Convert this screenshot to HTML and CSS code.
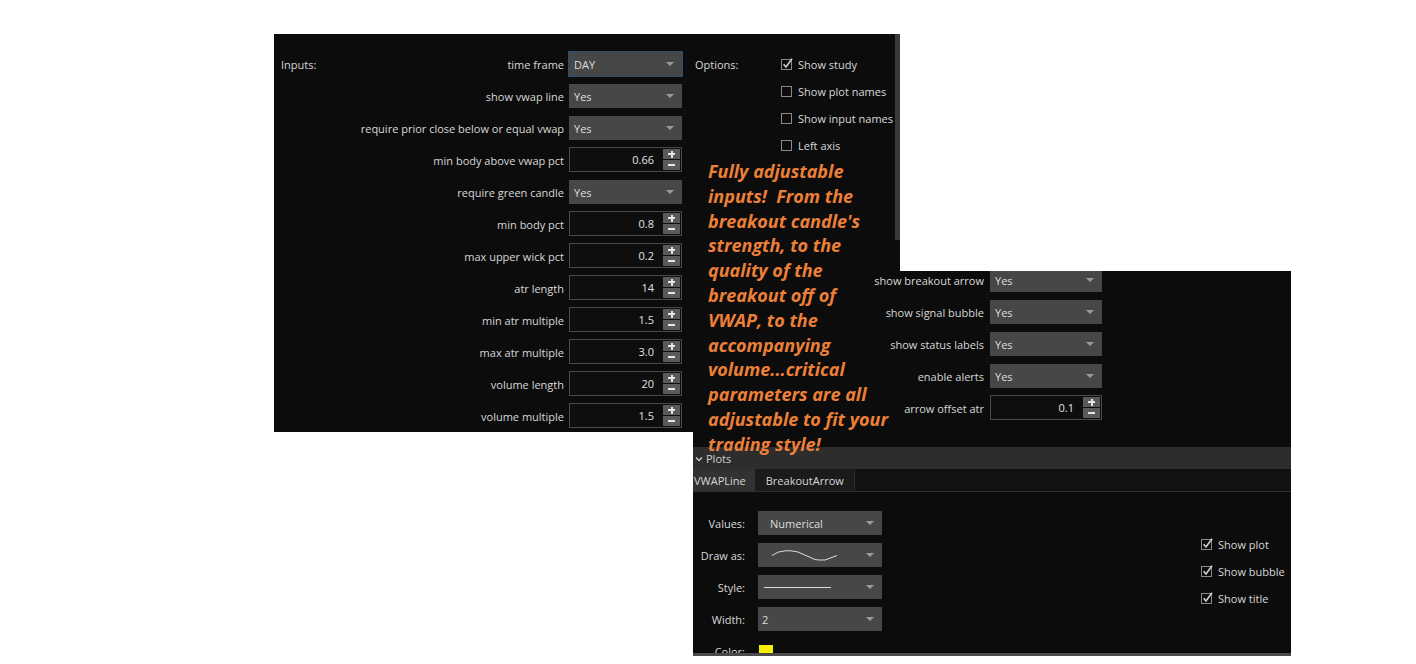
FILE: index.html
```html
<!DOCTYPE html>
<html>
<head>
<meta charset="utf-8">
<link rel="stylesheet" href="styles.css">
</head>
<body>
<div class="canvas">

  <div class="win win1">
    <div class="inputs">
      <div class="sec-title">Inputs:</div>

      <div class="lbl">time frame</div>
      <div class="dd focus"><span>DAY</span><i class="caret"></i></div>

      <div class="lbl">show vwap line</div>
      <div class="dd"><span>Yes</span><i class="caret"></i></div>

      <div class="lbl">require prior close below or equal vwap</div>
      <div class="dd"><span>Yes</span><i class="caret"></i></div>

      <div class="lbl">min body above vwap pct</div>
      <div class="spin"><span class="val">0.66</span><div class="btns"><b class="plus"></b><b class="minus"></b></div></div>

      <div class="lbl">require green candle</div>
      <div class="dd"><span>Yes</span><i class="caret"></i></div>

      <div class="lbl">min body pct</div>
      <div class="spin"><span class="val">0.8</span><div class="btns"><b class="plus"></b><b class="minus"></b></div></div>

      <div class="lbl">max upper wick pct</div>
      <div class="spin"><span class="val">0.2</span><div class="btns"><b class="plus"></b><b class="minus"></b></div></div>

      <div class="lbl">atr length</div>
      <div class="spin"><span class="val">14</span><div class="btns"><b class="plus"></b><b class="minus"></b></div></div>

      <div class="lbl">min atr multiple</div>
      <div class="spin"><span class="val">1.5</span><div class="btns"><b class="plus"></b><b class="minus"></b></div></div>

      <div class="lbl">max atr multiple</div>
      <div class="spin"><span class="val">3.0</span><div class="btns"><b class="plus"></b><b class="minus"></b></div></div>

      <div class="lbl">volume length</div>
      <div class="spin"><span class="val">20</span><div class="btns"><b class="plus"></b><b class="minus"></b></div></div>

      <div class="lbl">volume multiple</div>
      <div class="spin"><span class="val">1.5</span><div class="btns"><b class="plus"></b><b class="minus"></b></div></div>
    </div>

    <div class="options">
      <div class="opt-title">Options:</div>
      <div class="checks">
        <div class="chk"><span class="box on"><svg viewBox="0 0 12 12" width="12" height="12"><rect x="0.5" y="1.5" width="10" height="10" fill="none" stroke="#8a8a8a"/><path d="M2.6 6.2 L5 9 L11 0.8" fill="none" stroke="#d0d0d0" stroke-width="1.6"/></svg></span>Show study</div>
        <div class="chk"><span class="box"><svg viewBox="0 0 12 12" width="12" height="12"><rect x="0.5" y="1.5" width="10" height="10" fill="none" stroke="#8a8a8a"/></svg></span>Show plot names</div>
        <div class="chk"><span class="box"><svg viewBox="0 0 12 12" width="12" height="12"><rect x="0.5" y="1.5" width="10" height="10" fill="none" stroke="#8a8a8a"/></svg></span>Show input names</div>
        <div class="chk"><span class="box"><svg viewBox="0 0 12 12" width="12" height="12"><rect x="0.5" y="1.5" width="10" height="10" fill="none" stroke="#8a8a8a"/></svg></span>Left axis</div>
      </div>
    </div>

    <div class="scroll"></div>
  </div>

  <div class="win win2">
    <div class="rows2">
      <div class="lbl">show breakout arrow</div>
      <div class="dd"><span>Yes</span><i class="caret"></i></div>

      <div class="lbl">show signal bubble</div>
      <div class="dd"><span>Yes</span><i class="caret"></i></div>

      <div class="lbl">show status labels</div>
      <div class="dd"><span>Yes</span><i class="caret"></i></div>

      <div class="lbl">enable alerts</div>
      <div class="dd"><span>Yes</span><i class="caret"></i></div>

      <div class="lbl">arrow offset atr</div>
      <div class="spin"><span class="val">0.1</span><div class="btns"><b class="plus"></b><b class="minus"></b></div></div>
    </div>

    <div class="plots-head"><svg class="chev" viewBox="0 0 8 6" width="8" height="6"><path d="M1 1.5 L4 4.5 L7 1.5" fill="none" stroke="#cfcfcf" stroke-width="1.3"/></svg>Plots</div>
    <div class="tabs">
      <div class="tab active">VWAPLine</div>
      <div class="tab">BreakoutArrow</div>
    </div>

    <div class="plot-body">
      <div class="plot-grid">
        <div class="plbl">Values:</div>
        <div class="dd wide"><span class="num">Numerical</span><i class="caret"></i></div>

        <div class="plbl">Draw as:</div>
        <div class="dd wide"><svg class="wave" viewBox="0 0 90 24" width="90" height="24"><path d="M14 12.5 Q20 8 28 7.7 Q34 7.5 40 9 L57 16.5 Q60 17.2 64 17 L67 17 L79 12.5" fill="none" stroke="#dcdcdc" stroke-width="1"/></svg><i class="caret"></i></div>

        <div class="plbl">Style:</div>
        <div class="dd wide"><svg class="wave" viewBox="0 0 90 24" width="90" height="24"><path d="M6 12.5 L73 12.5" fill="none" stroke="#dcdcdc" stroke-width="1"/></svg><i class="caret"></i></div>

        <div class="plbl">Width:</div>
        <div class="dd wide"><span>2</span><i class="caret"></i></div>

        <div class="plbl">Color:</div>
        <div class="color-cell"><span class="swatch"></span></div>
      </div>

      <div class="plot-checks">
        <div class="chk"><span class="box on"><svg viewBox="0 0 12 12" width="12" height="12"><rect x="0.5" y="1.5" width="10" height="10" fill="none" stroke="#8a8a8a"/><path d="M2.6 6.2 L5 9 L11 0.8" fill="none" stroke="#d0d0d0" stroke-width="1.6"/></svg></span>Show plot</div>
        <div class="chk"><span class="box on"><svg viewBox="0 0 12 12" width="12" height="12"><rect x="0.5" y="1.5" width="10" height="10" fill="none" stroke="#8a8a8a"/><path d="M2.6 6.2 L5 9 L11 0.8" fill="none" stroke="#d0d0d0" stroke-width="1.6"/></svg></span>Show bubble</div>
        <div class="chk"><span class="box on"><svg viewBox="0 0 12 12" width="12" height="12"><rect x="0.5" y="1.5" width="10" height="10" fill="none" stroke="#8a8a8a"/><path d="M2.6 6.2 L5 9 L11 0.8" fill="none" stroke="#d0d0d0" stroke-width="1.6"/></svg></span>Show title</div>
      </div>
    </div>
  </div>

  <div class="callout">Fully adjustable<br>inputs!&nbsp; From the<br>breakout candle's<br>strength, to the<br>quality of the<br>breakout off of<br>VWAP, to the<br>accompanying<br>volume...critical<br>parameters are all<br>adjustable to fit your<br>trading style!</div>

</div>
</body>
</html>
```

FILE: styles.css
```css
html, body {
  margin: 0;
  padding: 0;
  background: #ffffff;
}

.canvas {
  position: relative;
  width: 1416px;
  height: 664px;
  overflow: hidden;
  font-family: "Open Sans", "DejaVu Sans", sans-serif;
  font-size: 11px;
  color: #d8d8d8;
}

.win {
  position: absolute;
  background: #0c0c0c;
  overflow: hidden;
  box-sizing: border-box;
}

.win1 {
  left: 274px;
  top: 34px;
  width: 626px;
  height: 398px;
  display: flex;
  z-index: 1;
}

.win2 {
  left: 693px;
  top: 271px;
  width: 598px;
  height: 385px;
  border-bottom: 3px solid #4b4b4b;
  z-index: 2;
}

/* ---- inputs grid ---- */
.inputs {
  display: grid;
  grid-template-columns: 60px 218px 113px;
  column-gap: 5px;
  row-gap: 8px;
  grid-auto-rows: 24px;
  padding: 18px 0 0 7px;
  width: 401px;
  flex: none;
}

.sec-title {
  grid-column: 1;
  grid-row: 1;
  align-self: center;
}

.lbl {
  grid-column: 2;
  align-self: center;
  text-align: right;
  white-space: nowrap;
}

.dd, .spin {
  grid-column: 3;
}

.dd {
  background: #474747;
  display: flex;
  align-items: center;
  padding-left: 5px;
  position: relative;
  box-sizing: border-box;
  height: 24px;
  color: #dedede;
}

.dd.focus {
  box-shadow: 0 0 0 1px #2b4e72;
}

.caret {
  position: absolute;
  right: 8px;
  top: 10px;
  width: 0;
  height: 0;
  border-left: 4px solid transparent;
  border-right: 4px solid transparent;
  border-top: 4px solid #9c9c9c;
}

.spin {
  display: flex;
  align-items: stretch;
  border: 1px solid #4a4a4a;
  background: #0e0e0e;
  box-sizing: border-box;
  height: 25px;
  margin-top: -1px;
}

.spin .val {
  flex: 1;
  text-align: right;
  padding-right: 9px;
  align-self: center;
  color: #e2e2e2;
}

.btns {
  display: flex;
  flex-direction: column;
  gap: 1px;
  width: 17px;
  margin: 1px 1px 1px 0;
}

.btns b {
  flex: 1;
  background: #5a5a5a;
  position: relative;
}

.btns b::before {
  content: "";
  position: absolute;
  left: 5px;
  top: 4px;
  width: 7px;
  height: 2px;
  background: #e6e6e6;
}

.btns .plus::after {
  content: "";
  position: absolute;
  left: 7.5px;
  top: 1.5px;
  width: 2px;
  height: 7px;
  background: #e6e6e6;
}

/* ---- options ---- */
.options {
  display: flex;
  padding: 17px 0 0 13px;
  flex: none;
  width: 200px;
}

.opt-title {
  width: 86px;
  flex: none;
  line-height: 27px;
  height: 27px;
}

.checks {
  display: flex;
  flex-direction: column;
}

.chk {
  display: flex;
  align-items: center;
  height: 27px;
  white-space: nowrap;
  gap: 5px;
}

.box {
  display: flex;
  width: 12px;
  height: 12px;
  margin-top: -1px;
}

.scroll {
  position: absolute;
  right: 0;
  top: 0;
  width: 5px;
  height: 206px;
  background: #3a3a3a;
}

/* ---- window 2 ---- */
.rows2 {
  display: grid;
  grid-template-columns: 291px 112px;
  column-gap: 6px;
  row-gap: 8px;
  grid-auto-rows: 24px;
  margin-top: -3px;
}

.rows2 .lbl { grid-column: 1; }
.rows2 .dd, .rows2 .spin { grid-column: 2; }

.plots-head {
  margin-top: 27px;
  height: 22px;
  background: #2d2d2d;
  display: flex;
  align-items: center;
  gap: 3px;
  padding-left: 2px;
  color: #cfcfcf;
}

.chev {
  margin-top: 1px;
}

.tabs {
  display: flex;
  height: 22px;
  background: #121212;
  border-bottom: 1px solid #2e2e2e;
}

.tab {
  display: flex;
  align-items: center;
  padding: 0 10px;
  background: #1b1b1b;
  border-right: 1px solid #2e2e2e;
  color: #d6d6d6;
}

.tab.active {
  background: #323232;
  padding: 0 9px 0 1px;
  border-right: 1px solid #1a1a1a;
}

.plot-body {
  display: flex;
}

.plot-grid {
  display: grid;
  grid-template-columns: 47px 124px;
  column-gap: 13px;
  row-gap: 8px;
  grid-auto-rows: 24px;
  padding: 19px 0 0 5px;
}

.plbl {
  align-self: center;
  text-align: right;
  white-space: nowrap;
}

.dd.wide {
  grid-column: 2;
  padding-left: 4px;
}

.dd .num {
  padding-left: 8px;
}

.wave {
  position: absolute;
  left: 0;
  top: 0;
}

.color-cell {
  display: flex;
  align-items: flex-start;
  padding-top: 6px;
  padding-left: 1px;
}

.swatch {
  width: 14px;
  height: 14px;
  background: #f5f000;
}

.plot-checks {
  margin-left: auto;
  width: 90px;
  padding-top: 39px;
  display: flex;
  flex-direction: column;
}

/* ---- callout ---- */
.callout {
  position: absolute;
  left: 708px;
  top: 159px;
  z-index: 5;
  font-family: "Open Sans", "DejaVu Sans", sans-serif;
  font-weight: 700;
  font-style: italic;
  font-size: 18px;
  line-height: 24.8px;
  color: #ec8038;
  white-space: nowrap;
}
```
